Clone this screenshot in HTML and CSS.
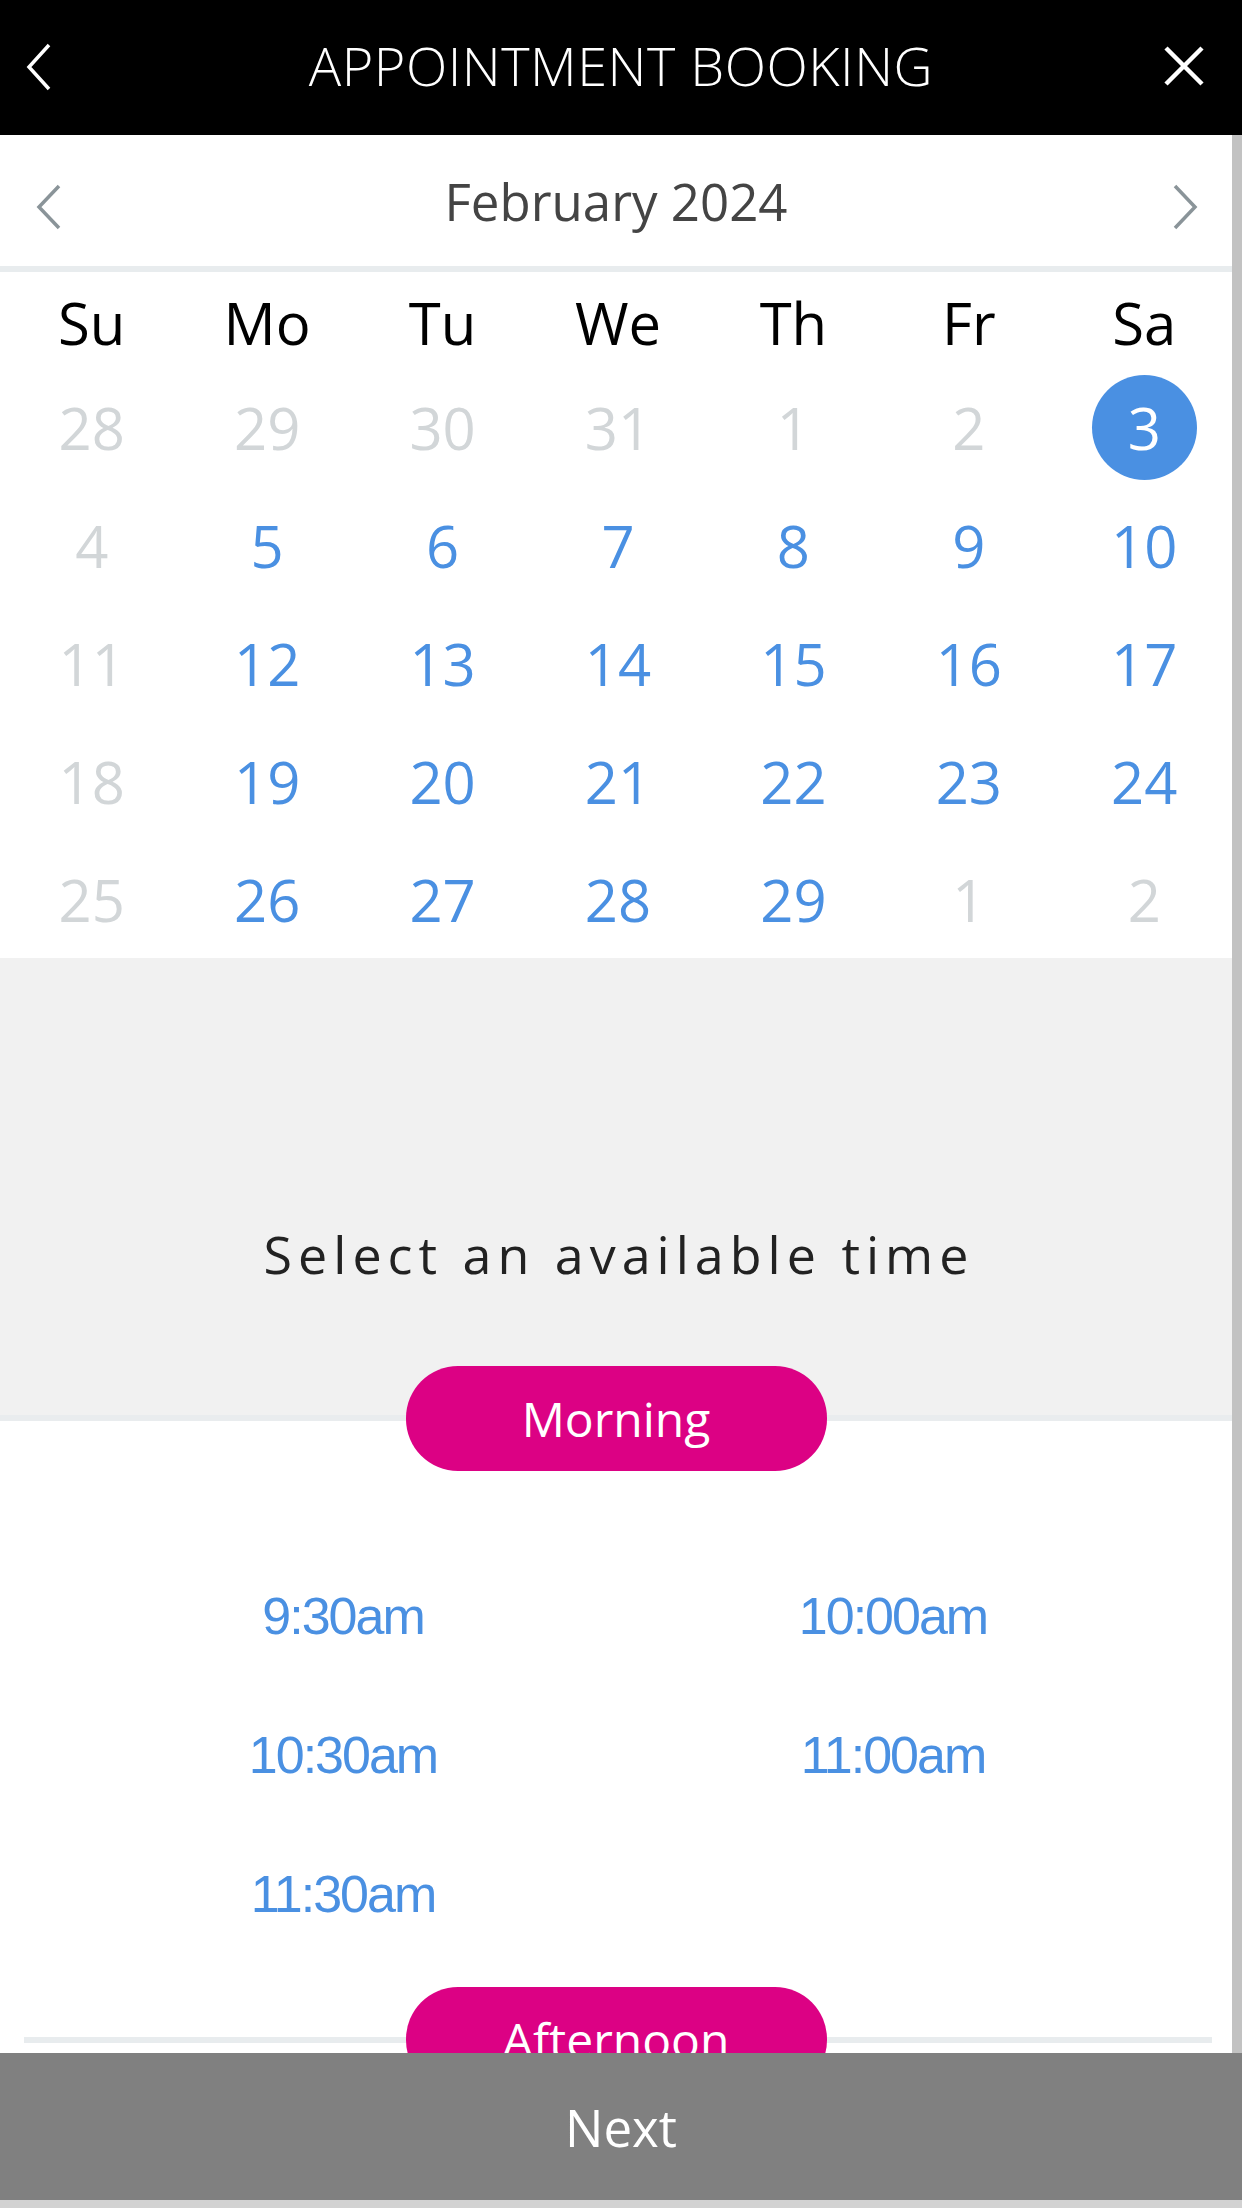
FILE: index.html
```html
<!DOCTYPE html>
<html lang="en">
<head>
<meta charset="utf-8">
<title>Appointment Booking</title>
<link rel="stylesheet" href="styles.css">
</head>
<body>
<div class="app">
  <header class="topbar">
    <svg class="topbar-back" width="26" height="48" viewBox="0 0 26 48"><path d="M23 2 L3 24 L23 46" fill="none" stroke="#fff" stroke-width="3.5"/></svg>
    <h1 class="topbar-title">APPOINTMENT BOOKING</h1>
    <svg class="topbar-close" width="44" height="44" viewBox="0 0 44 44"><path d="M4 4 L40 40 M40 4 L4 40" fill="none" stroke="#fff" stroke-width="4.5"/></svg>
  </header>

  <main class="scroll">
    <div class="month-nav">
      <svg class="month-prev" width="26" height="46" viewBox="0 0 26 46"><path d="M23 2 L3 23 L23 44" fill="none" stroke="#8a9499" stroke-width="3.5"/></svg>
      <div class="month-title">February 2024</div>
      <svg class="month-next" width="26" height="46" viewBox="0 0 26 46"><path d="M3 2 L23 23 L3 44" fill="none" stroke="#8a9499" stroke-width="3.5"/></svg>
    </div>

    <div class="calendar">
      <div class="weekday">Su</div><div class="weekday">Mo</div><div class="weekday">Tu</div><div class="weekday">We</div><div class="weekday">Th</div><div class="weekday">Fr</div><div class="weekday">Sa</div>

      <div class="day muted">28</div><div class="day muted">29</div><div class="day muted">30</div><div class="day muted">31</div><div class="day muted">1</div><div class="day muted">2</div><div class="day"><span class="selected">3</span></div>

      <div class="day muted">4</div><div class="day">5</div><div class="day">6</div><div class="day">7</div><div class="day">8</div><div class="day">9</div><div class="day">10</div>

      <div class="day muted">11</div><div class="day">12</div><div class="day">13</div><div class="day">14</div><div class="day">15</div><div class="day">16</div><div class="day">17</div>

      <div class="day muted">18</div><div class="day">19</div><div class="day">20</div><div class="day">21</div><div class="day">22</div><div class="day">23</div><div class="day">24</div>

      <div class="day muted">25</div><div class="day">26</div><div class="day">27</div><div class="day">28</div><div class="day">29</div><div class="day muted">1</div><div class="day muted">2</div>
    </div>

    <section class="prompt">
      <p class="prompt-text">Select an available time</p>
    </section>

    <div class="period period-morning">
      <span class="pill">Morning</span>
    </div>

    <div class="times">
      <div class="time">9:30am</div>
      <div class="time">10:00am</div>
      <div class="time">10:30am</div>
      <div class="time">11:00am</div>
      <div class="time">11:30am</div>
    </div>

    <div class="period period-lined">
      <span class="pill">Afternoon</span>
    </div>
  </main>

  <footer class="next-bar">Next</footer>
  <div class="bottom-strip"></div>
</div>
</body>
</html>
```

FILE: styles.css
```css
* { box-sizing: border-box; }

html, body {
  margin: 0;
  padding: 0;
  background: #fff;
}

body {
  font-family: "Open Sans", "Liberation Sans", sans-serif;
}

.app {
  width: 1242px;
  height: 2208px;
  display: flex;
  flex-direction: column;
  overflow: hidden;
}

/* Top bar */
.topbar {
  height: 135px;
  flex: none;
  background: #000;
  display: grid;
  grid-template-columns: 1fr auto 1fr;
  align-items: center;
}

.topbar-back {
  justify-self: start;
  margin-left: 26px;
  margin-bottom: 2px;
}

.topbar-title {
  margin: 0 0 6px;
  color: #fff;
  font-weight: 300;
  font-size: 54px;
  line-height: 60px;
  letter-spacing: 0.5px;
}

.topbar-close {
  justify-self: end;
  margin-right: 36px;
  margin-bottom: 4px;
}

/* Scroll area */
.scroll {
  flex: 1;
  min-height: 0;
  overflow: hidden;
  border-right: 10px solid #c2c2c2;
}

.month-nav {
  height: 137px;
  border-bottom: 6px solid #e8ecee;
  display: grid;
  grid-template-columns: 1fr auto 1fr;
  align-items: center;
  padding-top: 6px;
}

.month-prev {
  justify-self: start;
  margin-left: 36px;
  margin-top: 6px;
}

.month-next {
  justify-self: end;
  margin-right: 34px;
  margin-top: 6px;
}

.month-title {
  color: #444;
  font-size: 51px;
  line-height: 60px;
  margin-bottom: 6px;
}

/* Calendar */
.calendar {
  display: grid;
  grid-template-columns: repeat(7, 1fr);
  grid-template-rows: 96px;
  grid-auto-rows: 118px;
  padding-left: 4px;
}

.weekday {
  grid-row: 1;
  display: flex;
  align-items: center;
  justify-content: center;
  color: #000;
  font-size: 58px;
  padding-top: 5px;
}

.day {
  display: flex;
  align-items: center;
  justify-content: center;
  color: #4a90e2;
  font-size: 58px;
}

.day.muted {
  color: #d2d6d8;
}

.selected {
  width: 105px;
  height: 105px;
  border-radius: 50%;
  background: #4a90e2;
  color: #fff;
  display: flex;
  align-items: center;
  justify-content: center;
}

/* Prompt */
.prompt {
  height: 463px;
  background: #f1f1f1;
  border-bottom: 6px solid #e9ecee;
  padding-top: 266px;
}

.prompt-text {
  margin: 0;
  text-align: center;
  color: #222;
  font-size: 52px;
  line-height: 60px;
  letter-spacing: 6px;
  padding-left: 6px;
}

/* Period dividers */
.period {
  position: relative;
  height: 105px;
  display: flex;
  justify-content: center;
}

.period-morning {
  margin-top: -55px;
}

.period-lined {
  margin-top: 28px;
}

.period-lined::before {
  content: "";
  position: absolute;
  left: 24px;
  right: 20px;
  top: 50px;
  height: 6px;
  background: #e8ecee;
}

.pill {
  position: relative;
  width: 421px;
  height: 105px;
  border-radius: 52px;
  background: #dc0184;
  color: #fff;
  font-size: 48px;
  display: flex;
  align-items: center;
  justify-content: center;
}

/* Times */
.times {
  display: grid;
  grid-template-columns: 1fr 1fr;
  grid-auto-rows: 139px;
  padding: 75px 64px 0 68px;
  margin-bottom: -4px;
}

.time {
  display: flex;
  align-items: center;
  justify-content: center;
  font-family: "Liberation Sans", Arial, sans-serif;
  color: #4a90e2;
  font-size: 52px;
  letter-spacing: -2px;
}

/* Footer */
.next-bar {
  height: 147px;
  flex: none;
  background: #808080;
  color: #fff;
  font-size: 51px;
  display: flex;
  align-items: center;
  justify-content: center;
}

.bottom-strip {
  height: 8px;
  flex: none;
  background: #d2d2d2;
}
```
